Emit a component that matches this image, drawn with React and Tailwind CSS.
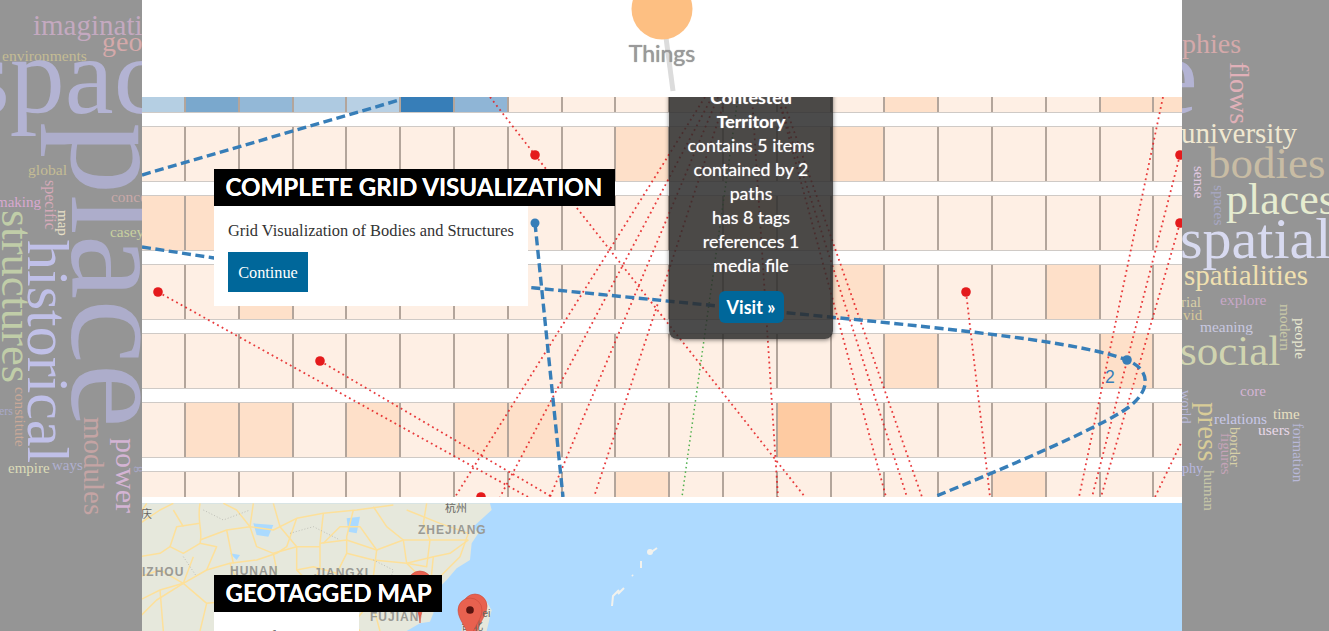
const rows = [
  { h: 'h-[17px] -mt-[1px]', blue: ['bg-[#b5cfe3]', 'bg-[#7aa8cd]', 'bg-[#93b8d7]', 'bg-[#aecae1]', 'bg-[#b8d0e4]', 'bg-[#377eb8]', 'bg-[#8fb5d6]'], o: { 14: 1, 18: 1, 19: 1 } },
  { h: 'h-[56px]', o: { 9: 1, 13: 1 } },
  { h: 'h-[56px]', o: { 0: 1, 1: 1, 11: 1 } },
  { h: 'h-[56px]', o: { 2: 1, 13: 1, 17: 1 } },
  { h: 'h-[56px]', o: { 14: 1, 18: 1 } },
  { h: 'h-[56px]', o: { 1: 1, 2: 1, 4: 1, 6: 1, 7: 1, 12: 2 } },
  { h: 'h-[56px]', o: { 9: 1, 16: 1 } },
];
const shades = ['bg-[#feefe4]', 'bg-[#fee0c9]', 'bg-[#fecba2]'];
const cellCount = Array.from({ length: 20 }, (_, i) => i);

function GridRow({ row, last }) {
  return (
    <div className={`flex shrink-0 border-y border-[#cfcac6] ${row.h} ${last ? 'border-b-0' : ''}`}>
      {cellCount.map((i) => {
        const bg = row.blue && row.blue[i] ? row.blue[i] : shades[(row.o && row.o[i]) || 0];
        return (
          <div
            key={i}
            className={`shrink-0 border-r-2 border-[#b3a59b] ${bg} ${i === 0 ? 'w-[44px]' : 'w-[53.8px]'}`}
          />
        );
      })}
    </div>
  );
}

const redLines = [
  [158, 292, 528, 497],
  [320, 361, 552, 497],
  [490, 97, 535, 155],
  [535, 155, 805, 497],
  [705, 97, 455, 497],
  [712, 97, 500, 497],
  [718, 97, 550, 497],
  [726, 97, 594, 497],
  [752, 97, 778, 497],
  [778, 97, 886, 497],
  [778, 97, 907, 497],
  [782, 97, 922, 497],
  [966, 292, 990, 497],
  [1163, 97, 1079, 497],
  [1180, 155, 1092, 497],
  [1180, 223, 1101, 497],
  [1155, 497, 1182, 441],
];
const redDots = [
  [535, 155], [158, 292], [320, 361], [966, 292], [481, 497], [1180, 155], [1180, 223],
];

function GridOverlay() {
  return (
    <svg className="absolute inset-0 w-[1040px] h-[400px]" viewBox="142 97 1040 400">
      {redLines.map((l, i) => (
        <line key={i} x1={l[0]} y1={l[1]} x2={l[2]} y2={l[3]} stroke="#e41a1c" strokeOpacity="0.85" strokeWidth="1.8" strokeDasharray="1.8 3.4" />
      ))}
      <line x1="738" y1="97" x2="682" y2="497" stroke="#4daf4a" strokeWidth="1.5" strokeDasharray="1.5 3" />
      {redDots.map((d, i) => (
        <circle key={i} cx={d[0]} cy={d[1]} r="4.8" fill="#e41a1c" />
      ))}
      <g fill="none" stroke="#377eb8" strokeWidth="3.4" strokeDasharray="9 4.5">
        <path d="M142 175 L420 94" />
        <path d="M142 247 L214 258 L535 288 L830 317 C960 330 1080 342 1127 360 C1151 370 1151 390 1129 407 C1100 428 1000 470 934 497" />
        <path d="M535 223 L563 497" />
      </g>
      <circle cx="535" cy="223" r="4.5" fill="#377eb8" />
      <circle cx="1127" cy="360" r="4.8" fill="#377eb8" />
      <text x="1105" y="383" fontFamily="'Liberation Sans', sans-serif" fontSize="17.5" fill="#377eb8">2</text>
    </svg>
  );
}

const words = [
  ['imagination', 33, 35, 29, '#c4a9c0'],
  ['geo', 102, 51, 28, '#d4a9aa'],
  ['environments', 2, 61, 15.6, '#c4bc94'],
  ['space', -33, 113, 110, '#b3b3d3'],
  ['place', 72, 122, 145, '#adadcb', 1],
  ['historical', 28, 240, 60, '#c0c0e8', 1],
  ['structures', 2, 210, 44.5, '#c0cda8', 1],
  ['global', 28, 175, 15.6, '#c4bc94'],
  ['specific', 45, 180, 16, '#d4a9b8', 1],
  ['map', 58, 210, 15, '#e8e0c8', 1],
  ['making', -4, 207, 15, '#d8a8d0'],
  ['concepts', 111, 202, 15.4, '#c9a9a9'],
  ['casey', 110, 237, 15.4, '#c8d0a0'],
  ['modules', 84, 417, 29, '#c4a4a4', 1],
  ['power', 116, 438, 30, '#d4b4d4', 1],
  ['constitute', 15, 387, 15.4, '#c9a898', 1],
  ['ers', -1, 415, 12, '#a8a8c8'],
  ['empire', 8, 473, 15, '#dcdcb8'],
  ['ways', 52, 470, 15, '#b0b0d0'],
  ['g', 137, 466, 13, '#a8a8c8', 1],
  ['phies', 1182, 53, 28, '#d4a9aa'],
  ['e', 1149, 113, 110, '#b3b3d3'],
  ['flows', 1230, 62, 28, '#e0b0b8', 1],
  ['university', 1181, 143, 29, '#f0e8d0'],
  ['bodies', 1208, 178, 45, '#c8bca4'],
  ['places', 1226, 214, 44, '#e6ecd0'],
  ['spatial', 1180, 258, 58, '#d8daf0'],
  ['sense', 1194, 166, 15, '#e0c8e0', 1],
  ['spaces', 1214, 185, 15.5, '#a8a8c4', 1],
  ['spatialities', 1184, 285, 29, '#f0e0b0'],
  ['rial', 1181, 307, 15, '#d8d0a8'],
  ['vid', 1183, 320, 15, '#d8c898'],
  ['explore', 1220, 305, 15.5, '#c8a8c8'],
  ['meaning', 1200, 332, 15.4, '#c8c8e0'],
  ['modern', 1280, 304, 15.4, '#c8c8a8', 1],
  ['people', 1295, 318, 15.4, '#e8e8d0', 1],
  ['social', 1180, 365, 43, '#d0d4b0'],
  ['core', 1240, 396, 15, '#d4b4d4'],
  ['world', 1181, 390, 14.5, '#b8b8d8', 1],
  ['press', 1198, 402, 29, '#d8cc98', 1],
  ['relations', 1214, 424, 15.4, '#c8c8e8'],
  ['time', 1273, 419, 15, '#e8e0c0'],
  ['users', 1258, 435, 15.5, '#e8d8e8'],
  ['formation', 1293, 423, 15, '#b8b8d8', 1],
  ['border', 1230, 427, 15.3, '#d8d0a8', 1],
  ['figures', 1221, 433, 15, '#c4a4b8', 1],
  ['human', 1204, 470, 15, '#c8c8a8', 1],
  ['phy', 1182, 473, 14, '#b8b8e0'],
];

function WordCloud() {
  return (
    <svg className="absolute inset-0 w-[1329px] h-[631px]" viewBox="0 0 1329 631">
      {words.map(([t, x, y, s, c, r], i) => (
        <text
          key={i}
          fontFamily="'Liberation Serif', serif"
          fontSize={s}
          fill={c}
          transform={`translate(${x} ${y})${r ? ' rotate(90)' : ''}`}
        >
          {t}
        </text>
      ))}
    </svg>
  );
}

const roads = [
  'M180 40 C170 100 190 120 180 160 L130 190 L90 170 L60 190 L0 200',
  'M180 150 L260 120 L330 110 L400 120 L470 85 L550 70 L650 60 L760 45',
  'M340 40 L330 110 L350 170 L400 190 L410 240 L400 300',
  'M470 85 L440 170 L410 190 L350 210 L270 220 L200 240 L130 280 L60 300 L0 330',
  'M550 70 L540 160 L540 230 L520 290 L430 340 L400 423',
  'M640 60 L620 140 L620 190 L590 250 L570 330 L580 423',
  'M700 50 L740 110 L790 150 L800 220 L830 250 L800 330',
  'M800 60 L900 100 L985 130 L960 200 L900 260 L870 300',
  'M540 160 L620 150 L710 180 L790 150 L870 150 L985 150',
  'M0 380 L50 330 L130 280 L200 340 L180 423',
  'M130 280 L160 200',
  'M400 190 L470 170 L540 170',
  'M620 190 L700 210 L800 220 L880 200',
  'M580 330 L680 350 L800 330',
  'M0 100 L60 60 L100 40',
  'M260 120 L280 220',
  'M90 170 L110 110 L180 100',
  'M200 340 L300 330 L400 300',
  'M700 350 L720 423',
  'M60 300 L70 423',
  'M400 40 L420 110 L470 170 L470 240 L520 290',
  'M330 110 L290 60 L250 40',
  'M550 160 L600 110 L660 110 L710 180 L700 260 L620 290',
  'M860 40 L850 100 L870 150 L860 230 L800 220',
  'M985 150 L930 190 L880 200 L870 300',
  'M0 260 L60 240 L130 280',
  'M200 240 L230 170 L180 160',
  'M270 220 L300 300 L260 380 L300 423',
  'M430 340 L350 290 L300 300',
  'M590 250 L520 230 L470 240',
  'M680 350 L640 400 L660 423',
  'M20 40 L0 70',
  'M100 60 L130 110',
];

function Marker({ cx, cy, tip, r }) {
  return (
    <g>
      <path
        d={`M${cx} ${tip} C${cx - 2} ${cy + r + 6} ${cx - r} ${cy + r - 2} ${cx - r} ${cy} A${r} ${r} 0 1 1 ${cx + r} ${cy} C${cx + r} ${cy + r - 2} ${cx + 2} ${cy + r + 6} ${cx} ${tip}Z`}
        fill="#e8614f"
        stroke="#c9493a"
        strokeWidth="0.6"
      />
      <circle cx={cx} cy={cy} r={r * 0.32} fill="#5a1410" />
    </g>
  );
}

function MapArt() {
  const label = { fontFamily: "'Liberation Sans', sans-serif", fontWeight: 700, fontSize: 12, fill: '#9a9a94', letterSpacing: 1 };
  return (
    <svg className="absolute inset-0 w-[1040px] h-[128px]" viewBox="142 503 1040 128">
      <g transform="translate(140 490) scale(0.33333)">
        <path d="M0 40 L1050 40 L1055 60 L1000 110 L1015 130 L995 160 L990 210 L950 235 L920 270 L900 290 L880 370 L870 395 L840 400 L800 423 L0 423Z" fill="#e6e8dc" />
        <path d="M975 345 L1030 320 L1055 360 L1040 423 L965 423Z" fill="#e6e8dc" />
        <path d="M340 100 L400 105 L385 140 L350 135Z M620 85 L660 80 L650 130 L625 125Z M270 190 L300 195 L290 210Z" fill="#aadaff" />
        <g fill="none" stroke="#fde09a" strokeWidth="4.5" strokeLinejoin="round">
          {roads.map((d, i) => (
            <path key={i} d={d} />
          ))}
        </g>
        <path d="M450 130 L520 110 L600 150 M700 210 L760 240 L740 300 M190 60 L250 90 L330 60 M130 200 L170 260" fill="none" stroke="#b5b5ad" strokeWidth="2.5" strokeDasharray="3 6" />
      </g>
      <g>
        <circle cx="650" cy="552" r="3" fill="#f2f2ee" />
        <path d="M650 553 L657 548 M641 561 L641 568 M632 575 L633 576 M619 590 L613 596 L612 606 M618 594 L624 588" stroke="#f2f2ee" strokeWidth="2" fill="none" />
      </g>
      <text x="142" y="576" {...label}>IZHOU</text>
      <text x="230" y="575" {...label}>HUNAN</text>
      <text x="314" y="577" {...label}>JIANGXI</text>
      <text x="418" y="534" {...label}>ZHEJIANG</text>
      <text x="370" y="621" {...label}>FUJIAN</text>
      <text x="445" y="512" fontFamily="'Noto Sans CJK SC', sans-serif" fontSize="11" fill="#66665f">杭州</text>
      <text x="141" y="518" fontFamily="'Noto Sans CJK SC', sans-serif" fontSize="11" fill="#66665f">庆</text>
      <Marker cx={420} cy={583} tip={623} r={12} />
      <Marker cx={475} cy={606} tip={640} r={12} />
      <text x="482" y="617" fontFamily="'Liberation Sans', sans-serif" fontSize="11" fill="#66665f">ei</text>
      <text x="461" y="630" fontFamily="'Noto Sans CJK SC', sans-serif" fontSize="11" fill="#66665f">台北</text>
      <Marker cx={470} cy={610} tip={642} r={12} />
    </svg>
  );
}

function Heading({ children, width }) {
  return (
    <h2 className={`bg-black h-[37px] pl-[11.5px] flex items-center font-['Lato',sans-serif] font-bold text-[24.1px] leading-none text-white whitespace-nowrap [text-shadow:0_0_0.6px_#fff] ${width}`}>
      {children}
    </h2>
  );
}

export default function App() {
  return (
    <div className="relative h-[631px] overflow-hidden bg-[#959595]">
      <WordCloud />
      <div className="relative ml-[142px] w-[1040px] h-[631px] flex flex-col bg-white">
        <header className="relative z-10 h-[97px] shrink-0 overflow-hidden bg-white">
          <svg className="absolute inset-0 w-[1040px] h-[97px]" viewBox="142 0 1040 97">
            <line x1="665" y1="30" x2="673" y2="91" stroke="#dcdcdc" strokeWidth="5" />
            <circle cx="662" cy="9" r="30.5" fill="#fdbf82" />
          </svg>
          <div className="absolute left-[448px] w-[144px] top-[39px] text-center font-['Lato',sans-serif] text-[23px] leading-[28px] text-[#9a9a9a] [text-shadow:0_0_1px_#888]">
            Things
          </div>
        </header>

        <section className="relative h-[400px] shrink-0 overflow-hidden">
          <div className="flex flex-col gap-[13px]">
            {rows.map((r, i) => (
              <GridRow key={i} row={r} last={i === rows.length - 1} />
            ))}
          </div>
          <GridOverlay />
          <div className="absolute left-[527px] top-[-22px] w-[164px] rounded-lg bg-[rgba(43,43,43,0.85)] pt-[10px] pb-4 px-4 text-center font-['Lato',sans-serif] text-white text-[17.8px] leading-[24px] shadow-[0_1px_4px_rgba(0,0,0,0.5)] [text-shadow:0_0_1px_rgba(255,255,255,0.6)]">
            <div className="font-bold">Contested Territory</div>
            <div>contains 5 items</div>
            <div>contained by 2 paths</div>
            <div>has 8 tags</div>
            <div>references 1 media file</div>
            <button className="mt-[14px] h-8 w-[65px] rounded-md bg-[#00679a] font-bold text-[18px] text-white leading-none">
              Visit »
            </button>
          </div>
          <div className="absolute left-[72px] top-[72px]">
            <Heading width="w-[401px]">COMPLETE GRID VISUALIZATION</Heading>
            <div className="bg-white w-[314px] h-[100px] px-[14px] pt-[16px] font-['Liberation_Serif',serif] text-[16.4px] leading-[18px] text-[#333]">
              <p className="whitespace-nowrap">Grid Visualization of Bodies and Structures</p>
              <button className="mt-[12px] w-20 h-10 pt-[1px] bg-[#00679a] text-white text-[16.3px] font-['Liberation_Serif',serif]">
                Continue
              </button>
            </div>
          </div>
        </section>

        <section className="relative mt-[6px] h-[128px] shrink-0 overflow-hidden bg-[#aedaff]">
          <MapArt />
          <div className="absolute left-[72px] top-[72px]">
            <Heading width="w-[228px]">GEOTAGGED MAP</Heading>
            <div className="bg-white w-[145px] h-[60px] px-[14px] pt-[16px] font-['Liberation_Serif',serif] text-[16.4px] leading-[18px] text-[#333]">
              Map of Items
            </div>
          </div>
        </section>
      </div>
    </div>
  );
}
